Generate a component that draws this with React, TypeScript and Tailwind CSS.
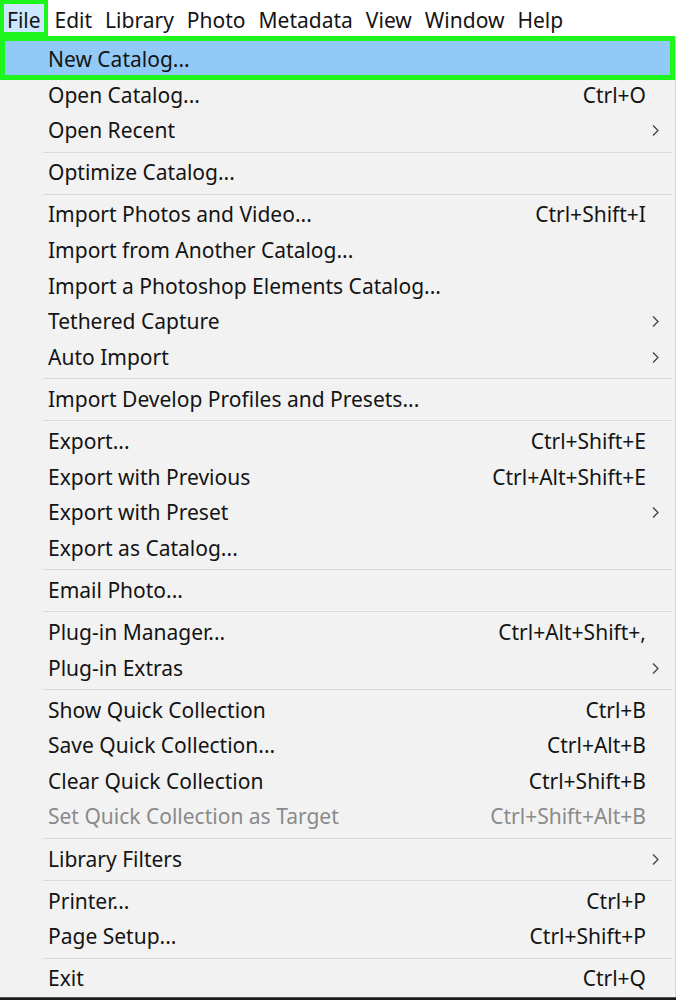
import React from "react";

type Item =
  | { kind: "sep" }
  | { kind: "item"; label: string; shortcut?: string; sub?: boolean; disabled?: boolean; active?: boolean };

const menuBar = ["Edit", "Library", "Photo", "Metadata", "View", "Window", "Help"];

const items: Item[] = [
  { kind: "item", label: "New Catalog...", active: true },
  { kind: "item", label: "Open Catalog...", shortcut: "Ctrl+O" },
  { kind: "item", label: "Open Recent", sub: true },
  { kind: "sep" },
  { kind: "item", label: "Optimize Catalog..." },
  { kind: "sep" },
  { kind: "item", label: "Import Photos and Video...", shortcut: "Ctrl+Shift+I" },
  { kind: "item", label: "Import from Another Catalog..." },
  { kind: "item", label: "Import a Photoshop Elements Catalog..." },
  { kind: "item", label: "Tethered Capture", sub: true },
  { kind: "item", label: "Auto Import", sub: true },
  { kind: "sep" },
  { kind: "item", label: "Import Develop Profiles and Presets..." },
  { kind: "sep" },
  { kind: "item", label: "Export...", shortcut: "Ctrl+Shift+E" },
  { kind: "item", label: "Export with Previous", shortcut: "Ctrl+Alt+Shift+E" },
  { kind: "item", label: "Export with Preset", sub: true },
  { kind: "item", label: "Export as Catalog..." },
  { kind: "sep" },
  { kind: "item", label: "Email Photo..." },
  { kind: "sep" },
  { kind: "item", label: "Plug-in Manager...", shortcut: "Ctrl+Alt+Shift+," },
  { kind: "item", label: "Plug-in Extras", sub: true },
  { kind: "sep" },
  { kind: "item", label: "Show Quick Collection", shortcut: "Ctrl+B" },
  { kind: "item", label: "Save Quick Collection...", shortcut: "Ctrl+Alt+B" },
  { kind: "item", label: "Clear Quick Collection", shortcut: "Ctrl+Shift+B" },
  { kind: "item", label: "Set Quick Collection as Target", shortcut: "Ctrl+Shift+Alt+B", disabled: true },
  { kind: "sep" },
  { kind: "item", label: "Library Filters", sub: true },
  { kind: "sep" },
  { kind: "item", label: "Printer...", shortcut: "Ctrl+P" },
  { kind: "item", label: "Page Setup...", shortcut: "Ctrl+Shift+P" },
  { kind: "sep" },
  { kind: "item", label: "Exit", shortcut: "Ctrl+Q" },
];

const Chevron = () => (
  <svg width="9" height="13" viewBox="0 0 9 13" fill="none">
    <path d="M2 1.5 L7 6.5 L2 11.5" stroke="#444" strokeWidth="1.3" />
  </svg>
);

export default function App() {
  return (
    <div
      className="w-[676px] h-[1000px] overflow-hidden bg-[#f2f2f2] text-[21px] text-[#141414] flex flex-col"
      style={{ fontFamily: '"Noto Sans", "Open Sans", sans-serif' }}
    >
      {/* Menu bar */}
      <div className="h-[36px] bg-white flex items-center shrink-0">
        <div className="h-[36px] w-[48px] border-[4px] border-[#1df51d] bg-[#cce8ff] flex items-center pl-[3px] pt-[5px] leading-none">
          File
        </div>
        {menuBar.map((m) => (
          <div key={m} className="px-[6.5px] pt-[5px] leading-none">
            {m}
          </div>
        ))}
      </div>

      {/* Dropdown */}
      <div className="flex-1 flex flex-col pt-[6px] border-r border-[#d6d6d6]">
        {items.map((it, i) =>
          it.kind === "sep" ? (
            <div key={i} className="h-[6.5px] flex items-center pl-[43px] pr-[3px]">
              <div className="h-px w-full bg-[#dadada]" />
            </div>
          ) : (
            <div key={i} className="relative h-[35.6px] flex items-center">
              {it.active && (
                <div className="absolute left-0 right-0 -top-[6px] -bottom-[2px] border-[5px] border-[#1df51d] bg-[#91c9f7]" />
              )}
              <div className="relative flex items-center w-full pl-[48px]">
                <span className={it.disabled ? "text-[#8a8a8a]" : ""}>{it.label}</span>
                <span className={"ml-auto " + (it.disabled ? "text-[#8a8a8a]" : "")}>{it.shortcut}</span>
                <span className="w-[29px] flex justify-start pl-[5px]">{it.sub && <Chevron />}</span>
              </div>
            </div>
          )
        )}
      </div>
      <div className="h-[5px] bg-[#1a1a1a] border-t border-[#555] shrink-0" />
    </div>
  );
}
